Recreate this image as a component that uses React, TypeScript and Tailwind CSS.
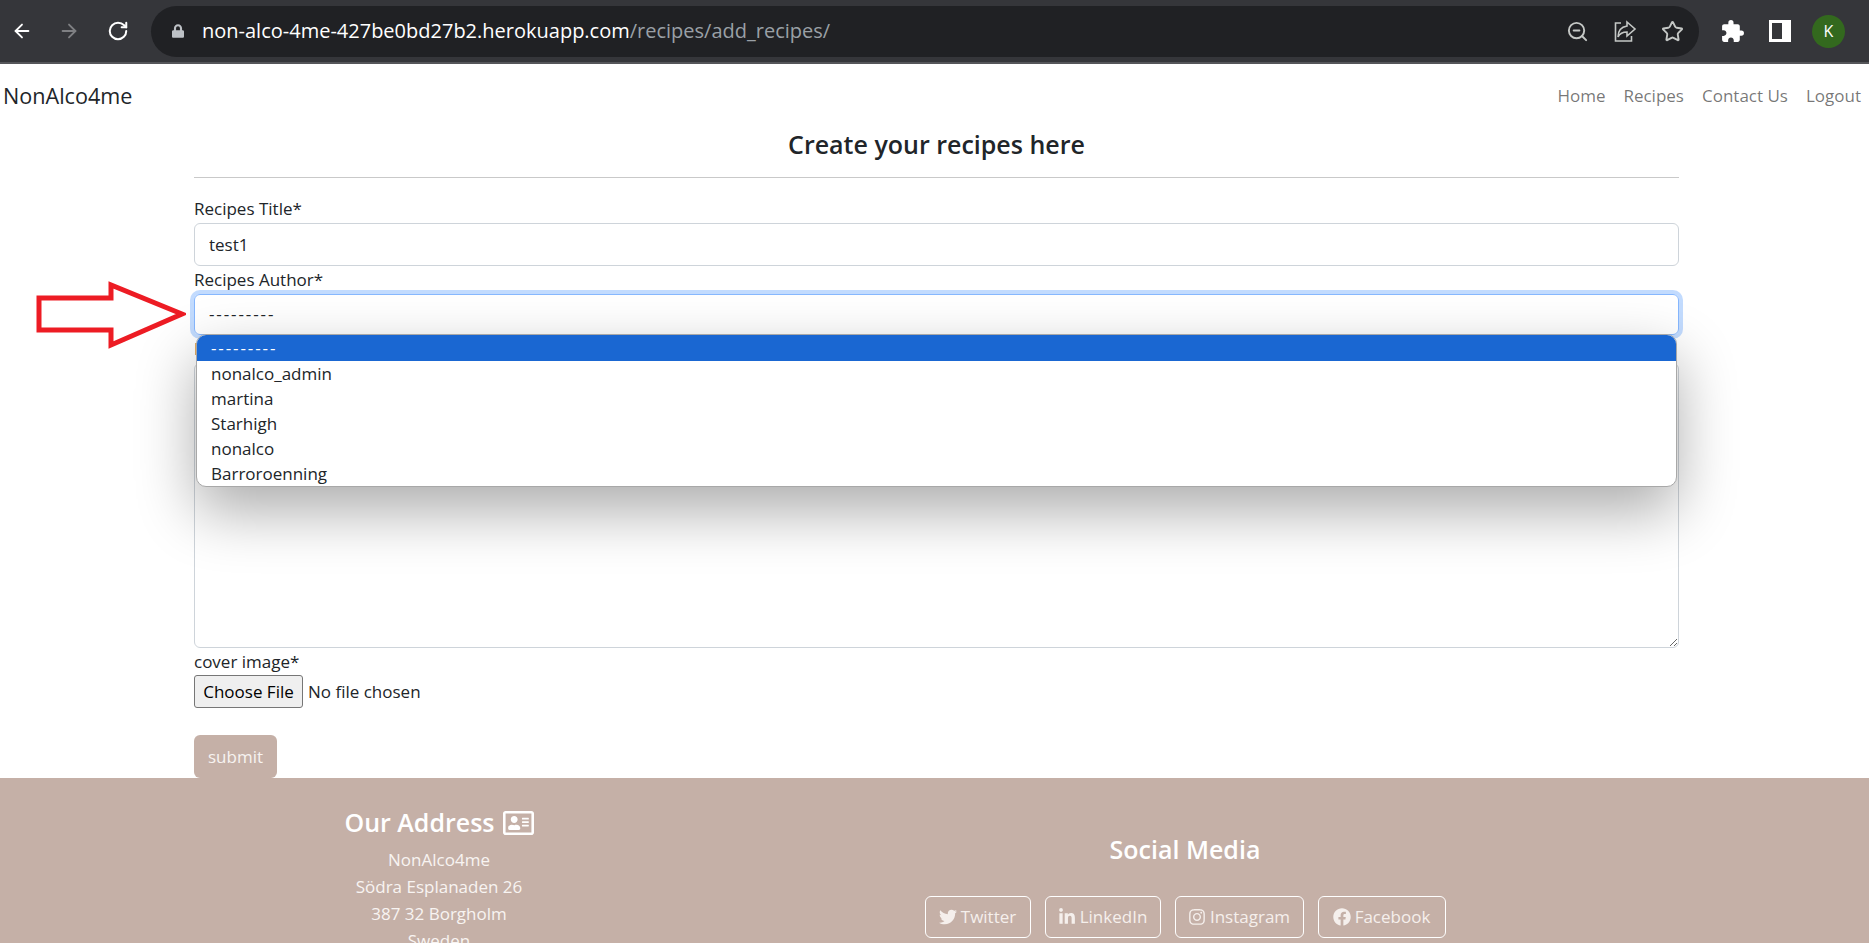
import { ArrowLeft, ArrowRight, RotateCw, ZoomOut, Star } from 'lucide-react'
import { FaTwitter, FaLinkedinIn, FaInstagram, FaFacebook, FaRegAddressCard, FaLock } from 'react-icons/fa'
import { MdExtension } from 'react-icons/md'

const authors = ['nonalco_admin', 'martina', 'Starhigh', 'nonalco', 'Barroroenning']
const address = ['NonAlco4me', 'Södra Esplanaden 26', '387 32 Borgholm', 'Sweden']

function BrowserBar() {
  return (
    <div className="flex h-[64px] items-center border-b-[2px] border-[#55565a] bg-[#35363a] pl-[11px] text-white">
      <ArrowLeft className="h-[22px] w-[22px] shrink-0" strokeWidth={2} />
      <ArrowRight className="ml-[25px] h-[22px] w-[22px] shrink-0 text-[#7f8083]" strokeWidth={2} />
      <RotateCw className="ml-[27px] h-[22px] w-[22px] shrink-0" strokeWidth={2.2} />
      <div className="ml-[22px] flex h-[51px] w-[1548px] shrink-0 items-center rounded-full bg-[#202124] pl-[21px] pr-[15px]">
        <FaLock className="h-[14px] w-[12px] shrink-0 text-[#bdc1c6]" />
        <span className="ml-[18px] flex-1 text-[20px] text-white">
          non-alco-4me-427be0bd27b2.herokuapp.com
          <span className="text-[#9aa0a6]">/recipes/add_recipes/</span>
        </span>
        <div className="flex items-center gap-[24px] text-[#c4c7c5]">
          <ZoomOut className="h-[23px] w-[23px]" strokeWidth={2} />
          <svg viewBox="0 0 24 24" fill="none" stroke="currentColor" strokeWidth="1.6" className="h-[24px] w-[24px]">
            <path d="M8 4H2.5v18h16v-5" />
            <path d="M14 3l8 7-8 7v-4c-4 0-7 1-9 5 0-6 3-10 9-11z" />
          </svg>
          <Star className="h-[23px] w-[23px]" strokeWidth={2} />
        </div>
      </div>
      <MdExtension className="ml-[21px] h-[25px] w-[25px] shrink-0" />
      <svg viewBox="0 0 22 22" className="ml-[24px] h-[22px] w-[22px] shrink-0">
        <path fill="#fff" fillRule="evenodd" d="M0 0h22v22H0zM3 3v16h10V3z" />
      </svg>
      <div className="ml-[21px] flex h-[33px] w-[33px] shrink-0 items-center justify-center rounded-full bg-[#33691e] text-[16px]">K</div>
    </div>
  )
}

function Field({ label, children }: { label: string; children: React.ReactNode }) {
  return (
    <div>
      <label className="block h-[28px] leading-[28px]">{label}</label>
      {children}
    </div>
  )
}

function SocialButton({ icon, label, width }: { icon: React.ReactNode; label: string; width: string }) {
  return (
    <a className={`flex h-[42px] items-center justify-center gap-[4px] rounded-[6px] border border-white text-[#f5efec] ${width}`}>
      {icon}
      {label}
    </a>
  )
}

export default function App() {
  return (
    <div className="relative h-[943px] overflow-hidden bg-white font-['Open_Sans','Noto_Sans',sans-serif] text-[17px] text-[#212529]">
      <BrowserBar />

      <nav className="flex h-[64px] items-center justify-between pl-[3px] pr-[8px]">
        <span className="text-[21.6px]">NonAlco4me</span>
        <div className="flex gap-[18px] text-[rgba(0,0,0,0.55)]">
          <a>Home</a>
          <a>Recipes</a>
          <a>Contact Us</a>
          <a>Logout</a>
        </div>
      </nav>

      <main className="mx-[194px] w-[1485px]">
        <h1 className="text-center text-[25px] font-semibold leading-[33px]">Create your recipes here</h1>
        <hr className="mt-[16px] border-[#c9c9c9]" />
        <div className="mt-[17px]">
          <Field label="Recipes Title*">
            <input
              readOnly
              value="test1"
              className="block h-[43px] w-full rounded-[6px] border border-[#ced4da] px-[14px]"
            />
          </Field>
          <div className="relative">
            <Field label="Recipes Author*">
              <div className="flex h-[41px] items-center rounded-[6px] border border-[#86b7fe] px-[14px] pb-[2px] tracking-[1.9px] shadow-[0_0_0_4px_rgba(13,110,253,0.25)]">---------</div>
            </Field>
            <div className="absolute left-[2px] right-[2px] top-[68px] z-10 h-[153px] overflow-hidden rounded-[10px] border border-[#a8a8a8] bg-white leading-[25px] shadow-[0_24px_60px_rgba(0,0,0,0.33)]">
              <div className="h-[26px] bg-[#1a67d2] px-[14px] tracking-[1.9px] text-white">---------</div>
              {authors.map(name => (
                <div key={name} className="h-[25px] px-[14px]">{name}</div>
              ))}
            </div>
          </div>
          <Field label="Recipes Ingredients*">
            <textarea className="block h-[285px] w-full rounded-[6px] border border-[#ced4da]" />
          </Field>
          <label className="block h-[27px] leading-[27px]">cover image*</label>
          <div className="flex items-center gap-[5px]">
            <button className="h-[33px] w-[109px] rounded-[3px] border border-[#767676] bg-[#efefef] text-black">Choose File</button>
            <span>No file chosen</span>
          </div>
          <button className="mt-[27px] block h-[43px] w-[83px] rounded-[6px] bg-[#c5b0a7] text-[#f7f3f1]">submit</button>
        </div>
      </main>

      <footer className="bg-[#c5b0a7] text-[#f8f4f2]">
        <div className="mx-[194px] grid w-[1485px] grid-cols-3 text-center">
          <div className="pr-[5px] pt-[28px]">
            <h3 className="flex h-[34px] items-center justify-center gap-[8px] text-[25px] font-semibold text-white">
              Our Address <FaRegAddressCard className="h-[28px] w-[31px]" />
            </h3>
            <div className="mt-[6px] leading-[27px]">
              {address.map(line => (
                <p key={line}>{line}</p>
              ))}
            </div>
          </div>
          <div className="col-span-2 pl-[2px] pt-[54px]">
            <h3 className="h-[34px] text-[25px] font-semibold leading-[34px] text-white">Social Media</h3>
            <div className="mt-[30px] flex justify-center gap-[14px]">
              <SocialButton width="w-[106px]" label="Twitter" icon={<FaTwitter className="h-[18px] w-[18px]" />} />
              <SocialButton width="w-[116px]" label="LinkedIn" icon={<FaLinkedinIn className="h-[18px] w-[18px]" />} />
              <SocialButton width="w-[129px]" label="Instagram" icon={<FaInstagram className="h-[18px] w-[18px]" />} />
              <SocialButton width="w-[128px]" label="Facebook" icon={<FaFacebook className="h-[18px] w-[18px]" />} />
            </div>
          </div>
        </div>
      </footer>

      {/* red annotation arrow */}
      <svg viewBox="0 0 150 70" fill="none" stroke="#ed1c24" strokeWidth="5" className="absolute left-[36px] top-[280px] h-[70px] w-[150px]">
        <path d="M3 18h72V5l71 29-71 31V50H3z" />
      </svg>
    </div>
  )
}
